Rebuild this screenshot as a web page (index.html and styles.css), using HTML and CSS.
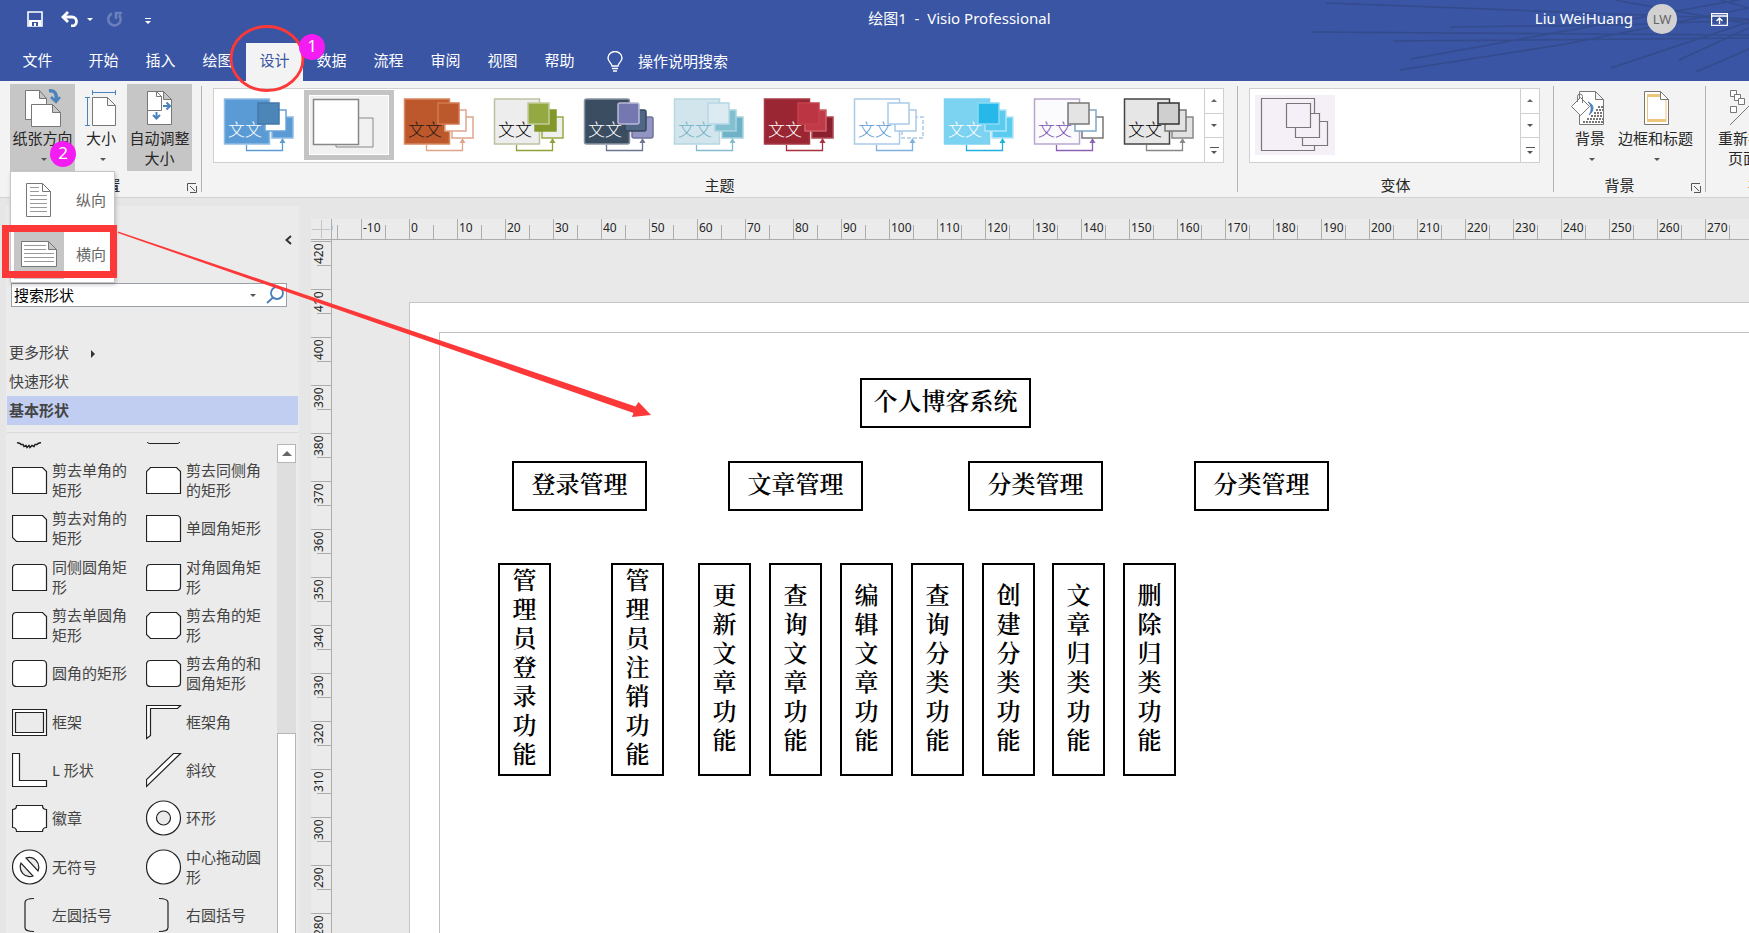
FILE: index.html
```html
<!DOCTYPE html>
<html lang="zh-CN">
<head>
    <meta charset="UTF-8">
    <meta name="viewport" content="width=device-width, initial-scale=1.0">
    <title>绘图1 - Visio Professional</title>
    <link rel="stylesheet" href="styles.css">
</head>
<body>

<header class="header">
    <svg class="header-lines" width="529" height="81" viewBox="0 0 529 81" fill="none" stroke="#344b8c" stroke-width="1.5">
        <path d="M106 3L529 19M93 32L529 35M173 41L529 38M230 27L400 25L529 20M191 59L529 -2M180 70L340 45L529 8M391 68L529 22M459 60L529 28M476 72L529 49M395 0L529 24M500 0L529 8"/>
    </svg>
    <div class="title-row">
        <div class="quick-access">
            <button class="qa-btn" aria-label="保存">
                <svg width="16" height="16" viewBox="0 0 16 16"><path d="M1 1h14v14H1z" fill="none" stroke="#fff" stroke-width="1.6"/><path d="M2 9h12v6H2z" fill="#fff"/><path d="M5 11h6v4H9v-3H7v3H5z" fill="#3955a3"/></svg>
            </button>
            <button class="qa-btn undo" aria-label="撤消">
                <svg width="18" height="16" viewBox="0 0 18 16" fill="none" stroke="#fff" stroke-width="2.8"><path d="M2 6h9a4.500 4.500 0 0 1 0 9h-1"/><path d="M7 1L2 6l5 5"/></svg>
                <span class="caret light"></span>
            </button>
            <button class="qa-btn redo" aria-label="恢复">
                <svg width="17" height="16" viewBox="0 0 17 16" fill="none" stroke="#6b80bb" stroke-width="2.6"><path d="M6 2.500A6.200 6.200 0 1 0 13 4"/><path d="M10 8V2h6"/></svg>
            </button>
            <button class="qa-btn more" aria-label="自定义快速访问工具栏">
                <svg width="6" height="8" viewBox="0 0 6 8"><path d="M0 0h6v1H0zM0 3h6L3 6z" fill="#fff"/></svg>
            </button>
        </div>
        <div class="doc-title">绘图1&nbsp; -&nbsp; Visio Professional</div>
        <div class="account">
            <span class="user-name">Liu WeiHuang</span>
            <span class="avatar">LW</span>
            <button class="qa-btn" aria-label="功能区显示选项">
                <svg width="17" height="13" viewBox="0 0 17 13" fill="none" stroke="#fff"><path d="M.5.500h16v12H.5zM1 3h15" stroke-width="1.400"/><path d="M8.500 11V5.500M5.500 8l3-3 3 3" stroke-width="1.400"/></svg>
            </button>
        </div>
    </div>
    <nav class="tabs">
        <a href="#" class="file">文件</a>
        <a href="#">开始</a>
        <a href="#">插入</a>
        <a href="#">绘图</a>
        <a href="#" class="active">设计</a>
        <a href="#">数据</a>
        <a href="#">流程</a>
        <a href="#">审阅</a>
        <a href="#">视图</a>
        <a href="#">帮助</a>
        <a href="#" class="tell-me">
            <svg width="16" height="21" viewBox="0 0 16 21" fill="none" stroke="#fff" stroke-width="1.400"><path d="M5 15c0-3-4-4-4-8a7 6.500 0 0 1 14 0c0 4-4 5-4 8zM5 17.500h6M6 20h4"/></svg>
            操作说明搜索
        </a>
    </nav>
</header>

<div class="ribbon">
    <section class="group page-setup">
        <div class="group-body">
            <div class="menu-wrap">
                <button class="big-btn pressed">
                    <svg width="40" height="40" viewBox="0 0 40 40" fill="#fff" stroke="#777">
                        <path d="M2.500 2.500h14l7 8v21h-21zM16.500 2.500v8h7"/>
                        <path d="M8.500 16.500h21l8 8v14h-29zM29.500 16.500v8h8"/>
                        <path d="M26 3c6-1 8 3 7 9" fill="none" stroke="#4a82bb" stroke-width="3.500"/><path d="M28 9l5 5 4-5" fill="none" stroke="#4a82bb" stroke-width="2.500"/>
                    </svg>
                    <span>纸张方向</span>
                    <span class="caret"></span>
                </button>
                <div class="menu">
                    <button class="menu-item">
                        <span class="menu-icon"><svg width="26" height="34" viewBox="0 0 26 34" fill="#fff" stroke="#777"><path d="M.5.500h16l8 8v25H.5zM16.500.500v8h8"/><path d="M4 4.500h9M4 8.500h9M4 12.500h17M4 16.500h17M4 20.500h17M4 24.500h17M4 28.500h17" stroke="#999"/></svg></span>
                        纵向
                    </button>
                    <button class="menu-item selected">
                        <span class="menu-icon"><svg width="36" height="26" viewBox="0 0 36 26" fill="#fff" stroke="#777"><path d="M.5.500h27l8 8v17H.5zM27.500.500v8h8"/><path d="M3 4.500h22M3 8.500h22M3 12.500h30M3 16.500h30M3 20.500h30" stroke="#999"/></svg></span>
                        横向
                    </button>
                </div>
            </div>
            <button class="big-btn narrow">
                <svg width="40" height="40" viewBox="0 0 40 40" fill="#fff" stroke="#777">
                    <path d="M11.500 9.500h15l8 8v20h-23zM26.500 9.500v8h8"/>
                    <path d="M11.500 4.500h23M11.500 2v5M34.500 2v5M6.500 9.500v28M4 9.500h5M4 37.500h5" stroke="#4a82bb"/>
                </svg>
                <span>大小</span>
                <span class="caret"></span>
            </button>
            <button class="big-btn pressed">
                <svg width="40" height="40" viewBox="0 0 40 40" fill="#fff" stroke="#777">
                    <path d="M7.500 3.500h16l8 8v25h-24zM23.500 3.500v8h8"/>
                    <path d="M7.500 3.500h9l5 5v14h-14zM16.500 3.500v5h5"/>
                    <path d="M23 18h6M26.500 14.500L30 18l-3.500 3.500M16.500 24v6M13 27l3.500 3.500L20 27" fill="none" stroke="#4a82bb" stroke-width="2"/>
                </svg>
                <span>自动调整</span>
                <span>大小</span>
            </button>
        </div>
        <div class="group-label">页面设置<button class="launcher" aria-label="页面设置"><svg width="10" height="10" viewBox="0 0 10 10" fill="none" stroke="#555"><path d="M.5 8V.500H9M3 3l5 5M9.500 3v6.500H3"/></svg></button></div>
    </section>
    <span class="sep"></span>
    <section class="group themes">
        <div class="group-body">
            <div class="gallery">
                <div class="gallery-items" id="themeItems"></div>
                <div class="gallery-nav">
                    <button aria-label="上一行"><span class="caret up"></span></button>
                    <button aria-label="下一行"><span class="caret"></span></button>
                    <button class="expand" aria-label="其他"><span class="caret"></span></button>
                </div>
            </div>
        </div>
        <div class="group-label plain">主题</div>
    </section>
    <span class="sep"></span>
    <section class="group variants">
        <div class="group-body">
            <div class="gallery">
                <div class="gallery-items wide">
                    <button class="variant" aria-label="变体 1">
                        <svg width="80" height="60" viewBox="0 0 80 60" fill="#f5f0f7" stroke="#777" stroke-width="1.200">
                            <path d="M6.500 3.500h53v52h-53z"/>
                            <path d="M47.500 26.500h25v24h-25z"/>
                            <path d="M40.500 18.500h24v24h-24z"/>
                            <path d="M31.500 8.500h24v24h-24z"/>
                        </svg>
                    </button>
                </div>
                <div class="gallery-nav">
                    <button aria-label="上一行"><span class="caret up"></span></button>
                    <button aria-label="下一行"><span class="caret"></span></button>
                    <button class="expand" aria-label="其他"><span class="caret"></span></button>
                </div>
            </div>
        </div>
        <div class="group-label plain">变体</div>
    </section>
    <span class="sep"></span>
    <section class="group backgrounds">
        <div class="group-body">
            <button class="big-btn fit">
                <svg width="40" height="40" viewBox="0 0 40 40" fill="#fff" stroke="#777">
                    <path d="M9.500 3.500h16l8 8v25h-24zM25.500 3.500v8h8"/>
                    <path d="M13 34h20M17 31h16M21 28h12M24 25h9M26 22h7M28 19h5" stroke-width="1.800" stroke-dasharray="2 1"/>
                    <path d="M18 14c4 3 4 9 1 13 5-4 6-10-1-13z" fill="#4a82bb" stroke="#4a82bb"/>
                    <path d="M10.500 9.500l9 9-9 9-9-9z"/>
                    <path d="M7.500 14V8.500a2.500 2.500 0 0 1 5 0V15" fill="none"/>
                </svg>
                <span>背景</span>
                <span class="caret"></span>
            </button>
            <button class="big-btn fit">
                <svg width="40" height="40" viewBox="0 0 40 40" fill="#fff" stroke="#777">
                    <path d="M8.500 3.500h16l8 8v25h-24z"/>
                    <path d="M11.500 6v28M30 12v22" stroke="#edc57c"/><path d="M11 7.500h14M11 32.500h19" stroke="#edc57c" stroke-width="3"/>
                    <path d="M24.500 3.500v8h8z"/>
                </svg>
                <span>边框和标题</span>
                <span class="caret"></span>
            </button>
        </div>
        <div class="group-label">背景<button class="launcher" aria-label="背景"><svg width="10" height="10" viewBox="0 0 10 10" fill="none" stroke="#555"><path d="M.5 8V.500H9M3 3l5 5M9.500 3v6.500H3"/></svg></button></div>
    </section>
    <span class="sep"></span>
    <section class="group layout-group">
        <div class="group-body">
            <button class="big-btn fit">
                <svg width="40" height="40" viewBox="0 0 40 40" fill="#fff" stroke="#777">
                    <path d="M2.500 2.500h6v6h-6z"/>
                    <path d="M6.500 6.500h6v6h-6z"/>
                    <path d="M10.500 10.500h6v6h-6zM2.500 18.500h6v6h-6zM2 37L37 2"/>
                </svg>
                <span>重新布局</span>
                <span class="with-caret">页面<span class="caret"></span></span>
            </button>
        </div>
        <div class="group-label plain">布局</div>
    </section>
</div>

<main class="workspace">
    <aside class="shapes-pane">
        <div class="pane-top">
            <button class="collapse" aria-label="最小化形状窗口"><svg width="7" height="10" viewBox="0 0 7 10" fill="none" stroke="#333" stroke-width="2"><path d="M6 1L1.500 5 6 9"/></svg></button>
        </div>
        <form class="search">
            <input type="text" value="搜索形状" aria-label="搜索形状">
            <span class="caret"></span>
            <button type="button" aria-label="搜索"><svg width="18" height="18" viewBox="0 0 18 18" fill="none" stroke="#4a7ebb" stroke-width="1.800"><circle cx="11" cy="7" r="6"/><path d="M7 11.500L1 17"/></svg></button>
        </form>
        <nav class="stencil-list">
            <a href="#">更多形状 <span class="caret side"></span></a>
            <a href="#">快速形状</a>
            <a href="#" class="current">基本形状</a>
        </nav>
        <div class="stencil">
            <div class="shape-grid" id="shapeGrid"></div>
            <div class="scrollbar">
                <button aria-label="向上滚动"><span class="caret up big"></span></button>
                <div class="track"></div>
                <div class="thumb"></div>
            </div>
        </div>
    </aside>
    <div class="editor">
        <div class="corner"></div>
        <div class="ruler-h" id="rulerH"></div>
        <div class="ruler-v" id="rulerV"></div>
        <div class="canvas">
            <div class="page">
                <div class="margin-guide"></div>
                <div class="node root">个人博客系统</div>
                <div class="node l2 n1">登录管理</div>
                <div class="node l2 n2">文章管理</div>
                <div class="node l2 n3">分类管理</div>
                <div class="node l2 n4">分类管理</div>
                <div class="node l3 f1"><span>管理员登录功能</span></div>
                <div class="node l3 f2"><span>管理员注销功能</span></div>
                <div class="node l3 f3"><span>更新文章功能</span></div>
                <div class="node l3 f4"><span>查询文章功能</span></div>
                <div class="node l3 f5"><span>编辑文章功能</span></div>
                <div class="node l3 f6"><span>查询分类功能</span></div>
                <div class="node l3 f7"><span>创建分类功能</span></div>
                <div class="node l3 f8"><span>文章归类功能</span></div>
                <div class="node l3 f9"><span>删除归类功能</span></div>
            </div>
        </div>
    </div>
</main>

<!-- step markers -->
<svg class="marks" width="660" height="430" viewBox="0 0 660 430">
    <ellipse cx="267" cy="58.500" rx="36" ry="32" fill="none" stroke="#fd3838" stroke-width="2.800"/>
    <rect x="5.500" y="228.500" width="108" height="46" fill="none" stroke="#fd3838" stroke-width="7"/>
    <path d="M118 231.500L333 304L635.500 406.500L638.500 402L651 415L632 417L633.500 413L333 308L118 233z" fill="#fd3838"/>
</svg>
<span class="step step-one">1</span>
<span class="step step-two">2</span>

<script>
    // fill/stroke for the big square, then the third, second and top squares, connector, text
    const themes = [
        { main: ['#5b9bd5', '#8fbce4'], c: ['#5b9bd5', '#8fbce4'], b: ['#fff', '#6aa3d8'], a: ['#4c86b9', '#4279ab'], line: '#5b9bd5', text: '#fff' },
        null,
        { main: ['#bc582c', '#d98760'], c: ['#fff', '#dfa58a'], b: ['#fff', '#dfa58a'], a: ['#bc582c', '#d27a50'], line: '#dfa58a', text: '#2a1a12' },
        { main: ['#ededed', '#bcc2a0'], c: ['#f0f0f0', '#98aa45'], b: ['#82982a', '#82982a'], a: ['#95a943', '#c3cc9a'], line: '#8ea23a', text: '#000' },
        { main: ['#3b4d61', '#8b95a2'], c: ['#9294c2', '#6f719d'], b: ['#4f6684', '#34475e'], a: ['#7577b0', '#b9bad8'], line: '#6b7590', text: '#fff', r: 2 },
        { main: ['#d3e5ec', '#b6d6e0'], c: ['#6fb2c8', '#a8d3e0'], b: ['#84bfd1', '#a8d3e0'], a: ['#dcebf1', '#b5d9e5'], line: '#82bccd', text: '#6fb2c8' },
        { main: ['#992632', '#a53a45'], c: ['#8a202d', '#b04753'], b: ['#c13a48', '#d0606b'], a: ['#bb3542', '#c5414e'], line: '#a8303e', text: '#fff' },
        { main: ['#fff', '#a9cae8'], c: ['#fff', '#a9cae8'], b: ['#fff', '#a9cae8'], a: ['#fff', '#a9cae8'], line: '#7fb0dc', text: '#5b9bd5', dash: '4 2' },
        { main: ['#7bd2f1', '#7bd2f1'], c: ['#5bcaef', '#b3e5f7'], b: ['#5bcaef', '#b3e5f7'], a: ['#25b8e8', '#8cdaf4'], line: '#1fb0de', text: '#fff' },
        { main: ['#fbfafc', '#b9a6cf'], c: ['#fff', '#777'], b: ['#fff', '#7fa6c6'], a: ['#e4e4e4', '#777'], line: '#8a62b4', text: '#7a4fb0' },
        { main: ['#e6e6e6', '#444'], c: ['#e2e2e2', '#888'], b: ['#e2e2e2', '#777'], a: ['#cfcfcf', '#333'], line: '#888', text: '#000' }
    ];

    function square(x, y, size, colors, r, dash) {
        return `<rect x="${x}" y="${y}" width="${size}" height="${size}" rx="${r || 0}" fill="${colors[0]}" stroke="${colors[1]}" stroke-width="1.500" stroke-dasharray="${dash || 'none'}"/>`;
    }

    function themeThumb(t) {
        if (!t) {
            return '<svg width="80" height="60" viewBox="0 0 80 60"><path d="M27 23h37v29H27z" fill="#f1f1f1" stroke="#888"/><path d="M4.500 4.500h45v45h-45z" fill="#fff" stroke="#888" stroke-width="1.500"/></svg>';
        }
        return `<svg width="80" height="60" viewBox="0 0 80 60">
            ${square(5.5, 4, 45, t.main, t.r)}${square(53, 22, 21, t.c, t.r, t.dash)}${square(46, 15, 21, t.b, t.r)}${square(39, 8, 21, t.a, t.r)}
            <path d="M27.500 50v5.500h36V46" fill="none" stroke="${t.line}" stroke-width="1.300"/><path d="M63.500 43l3 5h-6z" fill="${t.line}"/>
            <text class="theme-text" x="9" y="41" fill="${t.text}">文文</text></svg>`;
    }

    document.getElementById('themeItems').innerHTML = themes.map((t, i) =>
        `<button class="theme${t ? '' : ' selected'}" aria-label="主题 ${i + 1}">${themeThumb(t)}</button>`).join('');

    const shapes = [
        ['剪去单角的矩形', 'M.5 5.500h30l4 4v22H.5z'],
        ['剪去同侧角的矩形', 'M4.500 5.500h26l4 4v22H.5v-22z'],
        ['剪去对角的矩形', 'M.5 5.500h30l4 4v22h-30l-4-4z'],
        ['单圆角矩形', 'M.5 5.500h30q4 0 4 4v22H.5z'],
        ['同侧圆角矩形', 'M4.500 5.500h26q4 0 4 4v22H.5v-22q0-4 4-4z'],
        ['对角圆角矩形', 'M4.500 5.500h30v22q0 4-4 4H.5v-22q0-4 4-4z'],
        ['剪去单圆角矩形', 'M4.500 5.500h26l4 4v22H.5v-22q0-4 4-4z'],
        ['剪去角的矩形', 'M4.500 5.500h26l4 4v18l-4 4h-26l-4-4v-18z'],
        ['圆角的矩形', 'M4.500 5.500h26q4 0 4 4v18q0 4-4 4h-26q-4 0-4-4v-18q0-4 4-4z'],
        ['剪去角的和圆角矩形', 'M4.500 5.500h26l4 4v18q0 4-4 4h-26q-4 0-4-4v-18q0-4 4-4z'],
        ['框架', 'M.5 5.500h34v26H.5zM3.500 8.500v20h28v-20z'],
        ['框架角', 'M.5 1.500h34l-3 3H4.500v27l-4 3z'],
        ['L 形状', 'M.5 1.500h7v27h27v6H.5z'],
        ['斜纹', 'M27.500 1.500h7l-34 33v-7z'],
        ['徽章', 'M4.500 5.500h26q0 4 4 4v18q-4 0-4 4h-26q0-4-4-4v-18q4 0 4-4z'],
        ['环形', 'M.5 18a17 17 0 1 0 34 0a17 17 0 1 0-34 0zM10.500 18a7 7 0 1 1 14 0a7 7 0 1 1-14 0z'],
        ['无符号', 'M.5 18a17 17 0 1 0 34 0a17 17 0 1 0-34 0zM14 9c8-3 15 5 12 13zM9 14c-3 8 4 16 12 13z'],
        ['中心拖动圆形', 'M.5 18a17 17 0 1 0 34 0a17 17 0 1 0-34 0z'],
        ['左圆括号', 'M22 1.500q-9 0-9 4v25q0 4 9 4', true],
        ['右圆括号', 'M13 1.500q9 0 9 4v25q0 4-9 4', true]
    ];

    const cutRow = '<div class="cut"><svg width="36" height="14" viewBox="0 0 36 14" fill="none" stroke="#222"><path d="M5 .500l3 1 1 1 2 0 1 2 2-1 1 2 2-2 1 2 2-2 2 1 1-2 2 0 1-1 3-1" stroke-width="1.500"/></svg></div>' +
        '<div class="cut"><svg width="36" height="14" viewBox="0 0 36 14" fill="none" stroke="#222"><path d="M1 0l2 1.500h29L34 0"/></svg></div>';

    document.getElementById('shapeGrid').innerHTML = cutRow + shapes.map(([name, d, open]) =>
        `<div class="shape"><svg width="36" height="36" viewBox="0 0 36 36"><path d="${d}" fill="${open ? 'none' : '#fff'}" fill-rule="evenodd" stroke="#222" stroke-width="1.200"/></svg><span>${name}</span></div>`).join('');

    let ticks = '';
    for (let n = -20; n <= 500; n += 10) ticks += `<span class="tick">${n}</span>`;
    document.getElementById('rulerH').innerHTML = `<div class="ticks">${ticks}</div>`;

    ticks = '';
    for (let n = 420; n >= 0; n -= 10) ticks += `<span class="tick"><b>${n}</b></span>`;
    document.getElementById('rulerV').innerHTML = `<div class="ticks">${ticks}</div>`;
</script>

</body>
</html>
```
FILE: styles.css
```css
* {
    box-sizing: border-box;
}
body {
    margin: 0;
    height: 100vh;
    display: flex;
    flex-direction: column;
    overflow: hidden;
    position: relative;
    font-family: "Noto Sans", "Noto Sans CJK SC", sans-serif;
    font-size: 15px;
    line-height: 20px;
    color: #262626;
    background-color: #e6e6e6;
}
button {
    font: inherit;
    color: inherit;
    background: none;
    border: none;
    padding: 0;
}
a {
    color: inherit;
    text-decoration: none;
}
svg {
    display: block;
    flex-shrink: 0;
}
.caret {
    display: inline-block;
    border: 3px solid transparent;
    border-top-color: #555;
    border-bottom: 0;
}
.caret.up {
    border-top: 0;
    border-bottom: 3px solid #666;
}
.caret.up.big {
    border-width: 0 5px 5px;
}
.caret.side {
    border: 4px solid transparent;
    border-left-color: #333;
    border-right: 0;
}
.caret.light {
    border-top-color: #fff;
}

/* title bar and tabs */
.header {
    position: relative;
    background-color: #3955a3;
    color: white;
}
.header-lines {
    position: absolute;
    right: 0;
    top: 0;
}
.title-row {
    position: relative;
    height: 38px;
    display: flex;
    align-items: center;
}
.quick-access {
    width: 384px;
    padding-left: 27px;
    display: flex;
    align-items: center;
}
.qa-btn {
    display: flex;
    align-items: center;
}
.undo {
    margin-left: 18px;
    gap: 8px;
}
.redo {
    margin-left: 13px;
}
.more {
    margin: 5px 0 0 22px;
}
.doc-title {
    flex: 1;
    padding-bottom: 2px;
    text-align: center;
}
.account {
    display: flex;
    align-items: center;
    padding-right: 21px;
}
.user-name {
    padding-bottom: 2px;
}
.avatar {
    width: 30px;
    height: 30px;
    margin: 0 34px 0 14px;
    border-radius: 50%;
    background-color: #d2d2d2;
    color: #666;
    font-size: 13px;
    line-height: 30px;
    text-align: center;
}
.tabs {
    position: relative;
    display: flex;
    padding-top: 5px;
}
.tabs a {
    width: 57px;
    height: 38px;
    line-height: 34px;
    text-align: center;
}
.tabs .file {
    width: 75px;
}
.tabs .active {
    background-color: #f3f3f3;
    color: #3955a3;
}
.tabs .tell-me {
    width: auto;
    margin-left: 19px;
    padding-bottom: 2px;
    display: flex;
    align-items: center;
    gap: 15px;
}

/* ribbon */
.ribbon {
    display: flex;
    height: 117px;
    background-color: #f3f3f3;
    border-bottom: 1px solid #d2d2d2;
}
.group {
    flex-shrink: 0;
    padding-top: 3px;
}
.group-body {
    display: flex;
    height: 87px;
}
.sep {
    flex-shrink: 0;
    width: 1px;
    margin: 5px 0;
    background-color: #b5b5b5;
}
.group-label {
    position: relative;
    padding: 3px 20px 1px 0;
    line-height: 22px;
    text-align: center;
}
.group-label.plain {
    padding-right: 0;
}
.launcher {
    position: absolute;
    right: 4px;
    bottom: 4px;
}
.page-setup {
    width: 201px;
}
.page-setup .group-body {
    padding-left: 10px;
}
.themes .group-body {
    padding: 4px 13px 0 11px;
}
.variants .group-body {
    padding: 4px 13px 0 11px;
}
.backgrounds {
    width: 151px;
}
.backgrounds .group-body {
    padding-left: 16px;
    gap: 8px;
}
.layout-group {
    width: 114px;
}
.layout-group .group-body {
    padding: 0 12px;
}
.menu-wrap {
    position: relative;
}
.big-btn {
    width: 65px;
    height: 87px;
    padding-top: 4px;
    display: flex;
    flex-direction: column;
    align-items: center;
    white-space: nowrap;
}
.big-btn > .caret {
    margin: 10px 0 0 3px;
}
.with-caret .caret {
    margin: 0 0 3px 4px;
}
.big-btn.narrow {
    width: 52px;
}
.big-btn.fit {
    width: auto;
}
.big-btn.pressed {
    background-color: #c6c6c6;
}
.menu {
    position: absolute;
    z-index: 5;
    left: 0;
    top: 87px;
    width: 105px;
    padding-bottom: 2px;
    background-color: white;
    border: 1px solid #c6c6c6;
    box-shadow: 1px 2px 4px rgba(0, 0, 0, 0.2);
}
.menu-item {
    width: 100%;
    height: 54px;
    padding: 3px 8px 1px 3px;
    display: flex;
    align-items: center;
    justify-content: space-between;
    color: #666;
}
.menu-icon {
    width: 50px;
    height: 50px;
    display: flex;
    align-items: center;
    justify-content: center;
}
.menu-item.selected .menu-icon {
    background-color: #c6c6c6;
}
.gallery {
    display: flex;
    height: 75px;
    background-color: white;
    border: 1px solid #cfcfcf;
}
.gallery-items {
    display: flex;
    padding-top: 1px;
}
.gallery-items.wide {
    width: 270px;
    padding: 6px 5px;
}
.theme {
    width: 90px;
    height: 70px;
    padding: 5px;
}
.theme.selected {
    padding: 0;
    border: 5px solid #c4c4c4;
    background-color: #f1f1f1;
    box-shadow: inset 0 0 0 1px white;
}
.theme-text {
    font-size: 17px;
    font-weight: 300;
}
.variant {
    width: 80px;
    height: 60px;
    background-color: #f5f0f7;
}
.gallery-nav {
    width: 19px;
    display: flex;
    flex-direction: column;
    border-left: 1px solid #cfcfcf;
}
.gallery-nav button {
    flex: 1;
    display: flex;
    align-items: center;
    justify-content: center;
}
.gallery-nav button + button {
    border-top: 1px solid #cfcfcf;
}
.gallery-nav .expand {
    flex-direction: column;
    gap: 3px;
}
.gallery-nav .expand::before {
    content: "";
    width: 9px;
    height: 1px;
    background-color: #555;
}

/* shapes pane */
.workspace {
    flex: 1;
    min-height: 0;
    display: flex;
    padding: 8px 0 0 6px;
}
.shapes-pane {
    width: 293px;
    flex-shrink: 0;
    display: flex;
    flex-direction: column;
    background-color: #ebebeb;
    color: #444;
}
.pane-top {
    height: 77px;
    padding: 29px 7px 0 0;
    display: flex;
    align-items: flex-start;
    justify-content: flex-end;
}
.search {
    display: flex;
    align-items: center;
    height: 24px;
    margin: 0 12px 0 5px;
    padding-right: 2px;
    border: 1px solid #9aa0a8;
    background-color: white;
}
.search input {
    flex: 1;
    min-width: 0;
    padding: 0 1px 1px 2px;
    border: none;
    background: none;
    font: inherit;
    color: black;
}
.search .caret {
    margin-right: 10px;
}
.stencil-list {
    margin: 31px 1px 0;
    padding-bottom: 7px;
    border-bottom: 1px solid #dadada;
}
.stencil-list a {
    display: block;
    padding-left: 2px;
    line-height: 29px;
}
.stencil-list .caret {
    margin-left: 18px;
}
.stencil-list .current {
    background-color: #c1cdf1;
    font-weight: bold;
}
.stencil {
    flex: 1;
    min-height: 0;
    margin-top: 9px;
    display: flex;
    overflow: hidden;
}
.shape-grid {
    flex: 1;
    padding-left: 6px;
    display: grid;
    grid-template-columns: 134px 1fr;
    grid-template-rows: 14px;
    grid-auto-rows: 48px 48px 49px;
}
.shape {
    display: flex;
    align-items: center;
    gap: 4px;
}
.shape span {
    width: 80px;
}
.scrollbar {
    width: 19px;
    margin: 2px 3px 0 0;
    display: flex;
    flex-direction: column;
}
.scrollbar button {
    height: 19px;
    display: flex;
    align-items: center;
    justify-content: center;
    background-color: white;
    border: 1px solid #b5b5b5;
}
.track {
    flex: 270;
    background-color: #dedede;
}
.thumb {
    flex: 199;
    background-color: white;
    border: 1px solid #b5b5b5;
    border-bottom: none;
}

/* drawing window */
.editor {
    flex: 1;
    min-width: 0;
    margin: 13px 0 0 12px;
    display: grid;
    grid-template-columns: 21px 1fr;
    grid-template-rows: 21px 1fr;
    overflow: hidden;
}
.corner {
    background: linear-gradient(#c6c6c6, #c6c6c6) center / 1px 18px no-repeat, linear-gradient(#c6c6c6, #c6c6c6) center / 18px 1px no-repeat, #ebebeb;
    border-right: 1px solid #adadad;
    border-bottom: 1px solid #adadad;
}
.ruler-h, .ruler-v {
    overflow: hidden;
    background-color: #ebebeb;
    font-size: 12px;
    min-width: 0;
    min-height: 0;
}
.ruler-h {
    border-bottom: 1px solid #adadad;
}
.ruler-v {
    border-right: 1px solid #adadad;
}
.tick {
    position: relative;
    flex-shrink: 0;
    border: 0 solid #adadad;
}
.tick::after {
    content: "";
    position: absolute;
    background-color: #adadad;
}
.ruler-h .ticks {
    display: flex;
    margin-left: -19px;
}
.ruler-h .tick {
    width: 48px;
    height: 20px;
    padding-left: 1px;
    line-height: 17px;
    border-left-width: 1px;
}
.ruler-h .tick::after {
    left: 23px;
    bottom: 0;
    width: 1px;
    height: 14px;
}
.ruler-v .ticks {
    display: flex;
    flex-direction: column;
    padding-top: 1px;
}
.ruler-v .tick {
    width: 20px;
    height: 48px;
    border-top-width: 1px;
}
.ruler-v .tick::after {
    right: 0;
    top: 23px;
    width: 14px;
    height: 1px;
}
.ruler-v b {
    display: block;
    height: 22px;
    font-weight: normal;
    line-height: 16px;
    writing-mode: vertical-rl;
    transform: rotate(180deg);
}
.canvas {
    position: relative;
    background-color: #e9e9e9;
    overflow: hidden;
}
.page {
    position: absolute;
    left: 77px;
    top: 62px;
    right: 0;
    bottom: 0;
    background-color: white;
    border: 1px solid #c6c6c9;
    border-width: 1px 0 0 1px;
}
.margin-guide {
    position: absolute;
    inset: 29px 0 0 29px;
    border: 1px solid #c0c0c0;
    border-width: 1px 0 0 1px;
}
.node {
    position: absolute;
    display: flex;
    align-items: center;
    justify-content: center;
    padding-bottom: 8px;
    border: 2px solid black;
    background-color: white;
    color: black;
    font-family: "Noto Serif CJK SC", "Noto Serif SC", "Noto Sans CJK SC", serif;
    font-size: 24px;
    font-weight: 600;
    line-height: 29px;
}
.root {
    left: 450px;
    top: 75px;
    width: 171px;
    height: 50px;
}
.l2 {
    top: 158px;
    width: 135px;
    height: 50px;
}
.n1 { left: 102px; }
.n2 { left: 318px; }
.n3 { left: 558px; }
.n4 { left: 784px; }
.l3 {
    top: 260px;
    width: 53px;
    height: 213px;
}
.l3 span {
    width: 24px;
    word-break: break-all;
}
.f1 { left: 88px; }
.f2 { left: 201px; }
.f3 { left: 288px; }
.f4 { left: 359px; }
.f5 { left: 430px; }
.f6 { left: 501px; }
.f7 { left: 572px; }
.f8 { left: 642px; }
.f9 { left: 713px; }

/* step markers drawn over the window */
.marks {
    position: absolute;
    z-index: 10;
    left: 0;
    top: 0;
    pointer-events: none;
}
.step {
    position: absolute;
    z-index: 11;
    width: 26px;
    height: 26px;
    border-radius: 50%;
    background-color: #f31cf3;
    color: white;
    font-size: 17px;
    line-height: 24px;
    text-align: center;
}
.step-one {
    left: 299px;
    top: 34px;
}
.step-two {
    left: 50px;
    top: 141px;
}
```
